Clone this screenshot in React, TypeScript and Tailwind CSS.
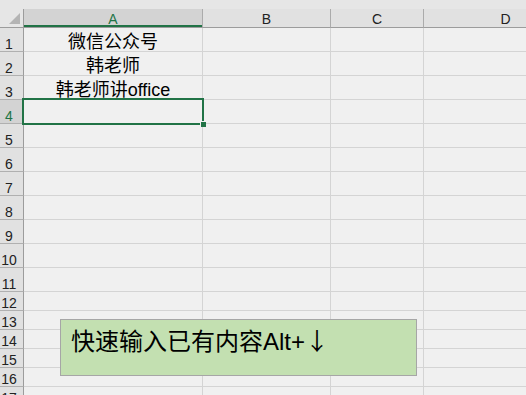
import React from 'react';

const cols = [
  { key: 'A', w: 'w-[179px]' },
  { key: 'B', w: 'w-[128px]' },
  { key: 'C', w: 'w-[93px]' },
  { key: 'D', w: 'w-[164px]' },
];

const rows = [
  { n: 1, h: 'h-[24px]', text: '微信公众号' },
  { n: 2, h: 'h-[24px]', text: '韩老师' },
  { n: 3, h: 'h-[24px]', text: '韩老师讲office' },
  { n: 4, h: 'h-[24px]' },
  { n: 5, h: 'h-[24px]' },
  { n: 6, h: 'h-[24px]' },
  { n: 7, h: 'h-[24px]' },
  { n: 8, h: 'h-[24px]' },
  { n: 9, h: 'h-[24px]' },
  { n: 10, h: 'h-[24px]' },
  { n: 11, h: 'h-[24px]' },
  { n: 12, h: 'h-[19px]' },
  { n: 13, h: 'h-[19px]' },
  { n: 14, h: 'h-[19px]' },
  { n: 15, h: 'h-[19px]' },
  { n: 16, h: 'h-[19px]' },
  { n: 17, h: 'h-[19px]' },
] as { n: number; h: string; text?: string }[];

export default function App() {
  return (
    <div className="relative w-[526px] h-[395px] overflow-hidden bg-[#e6e6e6] font-['Liberation_Sans','Noto_Sans_CJK_SC',sans-serif]">
      {/* column headers */}
      <div className="flex pt-[9px]">
        <div className="w-[24px] h-[19px] shrink-0 border-r border-b border-r-[#9c9c9c] border-b-[#9c9c9c] flex items-end justify-end">
          <svg width="11" height="11" viewBox="0 0 11 11" className="mr-[3px] mb-[3px]">
            <polygon points="11,0 11,11 0,11" fill="#b4b4b4" />
          </svg>
        </div>
        {cols.map((c) => (
          <div
            key={c.key}
            className={`${c.w} h-[19px] shrink-0 flex items-end justify-center pb-[1px] text-[14px] leading-[14px] border-r border-b border-r-[#ababab] border-b-[#9c9c9c] ${
              c.key === 'A'
                ? 'bg-[#d3d3d3] text-[#217346] shadow-[inset_0_-2px_0_#217346]'
                : 'bg-[#e1e1e1] text-[#222]'
            }`}
          >
            {c.key}
          </div>
        ))}
      </div>

      {/* rows */}
      {rows.map((r) => (
        <div key={r.n} className={`flex ${r.h}`}>
          <div
            className={`w-[24px] shrink-0 flex items-end border-r border-b border-r-[#9c9c9c] border-b-[#b0b0b0] ${
              r.n === 4 ? 'bg-[#d3d3d3] text-[#217346]' : 'bg-[#e1e1e1] text-[#222]'
            }`}
          >
            <span className="w-[18px] text-center text-[14px] leading-[14px]">{r.n}</span>
          </div>
          {cols.map((c) => (
            <div
              key={c.key}
              className={`${c.w} shrink-0 flex items-end justify-center bg-[#f0f0f0] border-r border-b border-[#d4d4d4] text-[18px] leading-[18px] text-black whitespace-nowrap`}
            >
              {c.key === 'A' && r.text}
            </div>
          ))}
        </div>
      ))}

      {/* active cell */}
      <div className="absolute left-[22px] top-[98px] w-[182px] h-[27px] border-2 border-[#217346]" />
      <div className="absolute left-[200px] top-[121px] w-[6px] h-[6px] bg-[#217346] border border-[#f0f0f0] border-r-0 border-b-0" />

      {/* callout */}
      <div className="absolute left-[60px] top-[319px] w-[357px] h-[57px] bg-[#c3e0b1] border border-[#a6a6a6] pl-[10px] pt-[8px] text-[24px] leading-[24px] text-black whitespace-nowrap">
        快速输入已有内容Alt+<span className="font-['Noto_Sans_CJK_SC',sans-serif]">↓</span>
      </div>
    </div>
  );
}
